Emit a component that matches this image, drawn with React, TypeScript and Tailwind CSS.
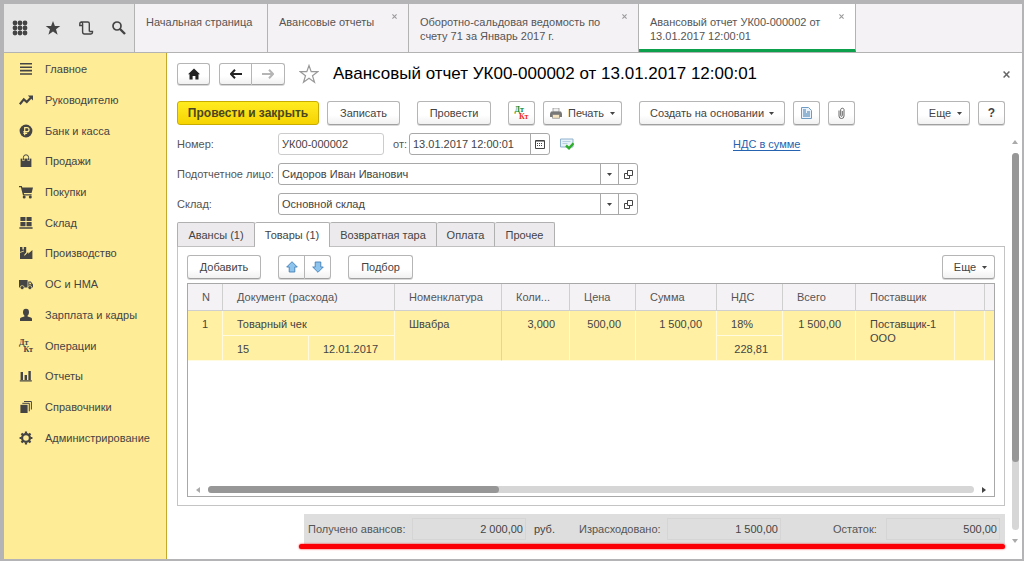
import React from 'react';
import clsx from 'clsx';

const Svg: React.FC<{ children: React.ReactNode; className?: string; box?: string }> = ({
    children,
    className = 'size-[14px]',
    box = '0 0 14 14',
}) => (
    <svg viewBox={box} className={clsx('shrink-0', className)} fill="currentColor" aria-hidden="true">
        {children}
    </svg>
);

const DtKt: React.FC<{ colored?: boolean }> = ({ colored }) => (
    <span className="flex flex-col w-[14px] font-['Liberation_Serif',serif] font-bold text-[8px] leading-[7px]" aria-hidden="true">
        <span className={clsx('self-start', colored && 'text-[#1d8a1d]')}>Дт</span>
        <span className={clsx('self-end', colored && 'text-[#ee2e24]')}>Кт</span>
    </span>
);

const Caret = () => (
    <Svg className="w-[5px] h-[3px]" box="0 0 5 3">
        <path d="M0 0h5L2.5 3z" />
    </Svg>
);

const sections = [
    { label: 'Главное', icon: <Svg><path d="M1 1h12v1.6H1zM1 4.4h12V6H1zM1 7.8h12v1.6H1zM1 11.2h12v1.6H1z" /></Svg> },
    { label: 'Руководителю', icon: <Svg><path d="M.8 11.2 4.8 6.4l3 2.6L12 4.6" fill="none" stroke="currentColor" strokeWidth="2.2" /><path d="M8.8 2.6H14v5z" /></Svg> },
    {
        label: 'Банк и касса',
        icon: (
            <Svg>
                <circle cx="7" cy="7" r="6.4" />
                <path d="M5.7 11.2V3.6H8a2 2 0 0 1 0 4.1H4.4M4.4 9.4h3.8" fill="none" stroke="#ffec97" strokeWidth="1.2" />
            </Svg>
        ),
    },
    { label: 'Продажи', icon: <Svg><path d="M1.6 4.6h10.8V13H1.6z" /><path d="M4.4 7V3.6a2.6 2.6 0 0 1 5.2 0V7" fill="none" stroke="#ffec97" strokeWidth="2" /><path d="M4.4 6.4V3.4a2.6 2.6 0 0 1 5.2 0v3" fill="none" stroke="currentColor" strokeWidth="1" /></Svg> },
    { label: 'Покупки', icon: <Svg><path d="M0 1h2.8l.5 1.4H14L12.6 8H4.8l.4 1.2h7.4v1.3H4L1.9 2.2H0z" /><circle cx="5.2" cy="12" r="1.5" /><circle cx="11.3" cy="12" r="1.5" /></Svg> },
    { label: 'Склад', icon: <Svg><path d="M1.4 1h5.1v4H1.4zM7.5 1h5.1v4H7.5zM1.4 6h5.1v4.2H1.4zM7.5 6h5.1v4.2H7.5zM.4 11.2h13.2v1.6H.4z" /></Svg> },
    { label: 'Производство', icon: <Svg><path d="M1 13V1h2.400v2.600h1.400V1h2.400v5.400L5.400 8.400V10l3.800-4v1.800L13.400 4v9z" /><path d="M.6 6.600 5 5" fill="none" stroke="#ffec97" strokeWidth=".8" /></Svg> },
    { label: 'ОС и НМА', icon: <Svg><path d="M0 3h8.6v7.4H0zM9.3 4.6h2.5L14 7.4v3H9.3z" /><circle cx="3.2" cy="10.6" r="2" stroke="#ffec97" strokeWidth=".7" /><circle cx="10.9" cy="10.6" r="2" stroke="#ffec97" strokeWidth=".7" /><path d="M10.3 5.6h1.1l1.1 1.6h-2.2z" fill="#ffec97" /></Svg> },
    { label: 'Зарплата и кадры', icon: <Svg><path d="M4 4.2a3 3.4 0 0 1 6 0c0 1.6-.6 2.8-1.4 3.4v1l3.2.9c.8.3 1.2.8 1.2 1.6V13H1v-1.9c0-.8.4-1.3 1.2-1.6l3.2-.9v-1C4.6 7 4 5.8 4 4.2z" /></Svg> },
    { label: 'Операции', icon: <DtKt /> },
    { label: 'Отчеты', icon: <Svg><path d="M1.6 3h2.4v8H1.6zM5.6 6H8v5H5.6zM9.4 2h2.4v9H9.4zM.8 11.2h12v1.2H.8z" /></Svg> },
    { label: 'Справочники', icon: <Svg><path d="M1.4 4.8h7.200V13H1.4z" /><path d="M3.3 3.3h7v8M5 1.5h7.4v8" fill="none" stroke="currentColor" strokeWidth="1" /></Svg> },
    {
        label: 'Администрирование',
        icon: (
            <Svg>
                <circle cx="7" cy="7" r="3.9" fill="none" stroke="currentColor" strokeWidth="2.2" />
                <path d="M7 .6v2M7 11.4v2M.6 7h2M11.4 7h2M2.5 2.5l1.4 1.4M10.1 10.1l1.4 1.4M2.5 11.5l1.4-1.4M10.1 3.9l1.4-1.4" stroke="currentColor" strokeWidth="2.2" />
            </Svg>
        ),
    },
];

const windows = [
    { title: 'Начальная страница', width: 'w-[133px]', closable: false },
    { title: 'Авансовые отчеты', width: 'w-[141px]', closable: true },
    { title: 'Оборотно-сальдовая ведомость по счету 71 за Январь 2017 г.', width: 'w-[230px]', closable: true },
    { title: 'Авансовый отчет УК00-000002 от 13.01.2017 12:00:01', width: 'w-[217px]', closable: true, active: true },
];

const Cross: React.FC<{ className?: string }> = ({ className }) => (
    <Svg className={className} box="0 0 6 6">
        <path d="M.5.5l5 5M5.5.5l-5 5" fill="none" stroke="currentColor" strokeWidth="1.3" />
    </Svg>
);

type ButtonProps = React.ButtonHTMLAttributes<HTMLButtonElement> & { primary?: boolean };

const Button: React.FC<ButtonProps> = ({ primary, className, children, ...rest }) => (
    <button
        type="button"
        className={clsx(
            'flex items-center justify-center shrink-0 rounded-[3px] border whitespace-nowrap',
            primary
                ? 'bg-gradient-to-b from-[#ffec1f] to-[#f6d300] border-[#c9ac00] font-bold text-[12px] text-[#4a4620]'
                : 'bg-gradient-to-b from-white from-60% to-[#f1f1f1] border-[#b5b5b5] border-b-[#a0a0a0] shadow-[0_1px_0_#d8d8d8]',
            className,
        )}
        {...rest}
    >
        {children}
    </button>
);

const SelectField: React.FC<{ id: string; label: string; value: string }> = ({ id, label, value }) => (
    <div className="flex items-center h-[22px]">
        <label htmlFor={id} className="w-[101px] shrink-0 whitespace-nowrap text-[#555]">{label}</label>
        <div className="flex w-[360px] h-[22px] rounded-[3px] border border-[#a8a8a8]">
            <input id={id} defaultValue={value} className="flex-1 min-w-0 px-[3px] outline-none" />
            <button type="button" aria-label={`Выбрать: ${label}`} className="w-[18px] border-l border-[#a8a8a8] flex items-center justify-center">
                <Caret />
            </button>
            <button type="button" aria-label={`Открыть: ${label}`} className="w-[19px] border-l border-[#a8a8a8] flex items-center justify-center">
                <Svg className="size-[9px]" box="0 0 9 9">
                    <path d="M3.5.5h5v5h-5zM3 3.5H.5v5h5V6" fill="none" stroke="currentColor" />
                </Svg>
            </button>
        </div>
    </div>
);

const totals = [
    { id: 'received', label: 'Получено авансов:', value: '2 000,00', width: 'w-[104px]', unit: 'руб.' },
    { id: 'spent', label: 'Израсходовано:', value: '1 500,00', width: 'w-[88px]' },
    { id: 'rest', label: 'Остаток:', value: '500,00', width: 'w-[53px] ml-[52px]' },
];

const tabs = [
    { label: 'Авансы (1)', width: 'w-[78px]' },
    { label: 'Товары (1)', width: 'w-[75px]', active: true },
    { label: 'Возвратная тара', width: 'w-[107px]' },
    { label: 'Оплата', width: 'w-[58px]' },
    { label: 'Прочее', width: 'w-[60px]' },
];

const th = 'h-[27px] border-r border-b border-[#cfcfcf] px-3.5 font-normal text-left whitespace-nowrap overflow-hidden';
const td = 'border-r border-b border-[#fffbe0] px-3.5 pt-1.5 align-top leading-[14px]';

const GoodsTable = () => (
    <table className="w-full table-fixed border-separate border-spacing-0">
        <colgroup>
            <col className="w-[35px]" />
            <col className="w-[86px]" />
            <col className="w-[86px]" />
            <col className="w-[107px]" />
            <col className="w-[68px]" />
            <col className="w-[66px]" />
            <col className="w-[81px]" />
            <col className="w-[66px]" />
            <col className="w-[73px]" />
            <col className="w-[99px]" />
            <col className="w-[30px]" />
            <col />
        </colgroup>
        <thead className="bg-[#f5f2f5] text-[#555]">
            <tr>
                <th className={th}>N</th>
                <th className={th} colSpan={2}>Документ (расхода)</th>
                <th className={th}>Номенклатура</th>
                <th className={th}>Коли...</th>
                <th className={th}>Цена</th>
                <th className={th}>Сумма</th>
                <th className={th}>НДС</th>
                <th className={th}>Всего</th>
                <th className={th} colSpan={2}>Поставщик</th>
                <th className="border-b border-[#cfcfcf]" />
            </tr>
        </thead>
        <tbody className="bg-[#fff0a3]">
            <tr className="h-[25px]">
                <td className={td} rowSpan={2}>1</td>
                <td className={td} colSpan={2}>Товарный чек</td>
                <td className={clsx(td, 'border-r-[#ddd5b0]')} rowSpan={2}>Швабра</td>
                <td className={clsx(td, 'text-right')} rowSpan={2}>3,000</td>
                <td className={clsx(td, 'text-right')} rowSpan={2}>500,00</td>
                <td className={clsx(td, 'text-right whitespace-nowrap')} rowSpan={2}>1 500,00</td>
                <td className={td}>18%</td>
                <td className={clsx(td, 'text-right whitespace-nowrap')} rowSpan={2}>1 500,00</td>
                <td className={td} rowSpan={2}>Поставщик-1 ООО</td>
                <td className={td} rowSpan={2} />
                <td className="border-b border-[#fffbe0]" rowSpan={2} />
            </tr>
            <tr className="h-[25px]">
                <td className={td}>15</td>
                <td className={td}>12.01.2017</td>
                <td className={clsx(td, 'text-right')}>228,81</td>
            </tr>
        </tbody>
    </table>
);

export default function App() {
    return (
        <div className="flex flex-col min-h-screen bg-[#b4b4b6] pt-1 pl-1 pr-0.5 pb-0.5 font-['Liberation_Sans',Arial,sans-serif] text-[11px] leading-[14px] text-[#444]">
            <header className="flex h-[49px] border-b border-[#b3b3b3] bg-[#f5f2f6]">
                <div className="flex items-center w-[131px] shrink-0 bg-[#e6e6e6] border-r border-[#b3b3b3] pl-2 gap-[17px]">
                    <button type="button" aria-label="Меню">
                        <Svg className="size-4" box="0 0 16 16">
                            {[3, 8, 13].map((y) => [3, 8, 13].map((x) => <circle key={`${x}-${y}`} cx={x} cy={y} r="2.4" />))}
                        </Svg>
                    </button>
                    <button type="button" aria-label="Избранное">
                        <Svg className="size-4" box="0 0 16 16">
                            <path d="M8 1l1.9 5h5.4l-4.3 3.3 1.6 5.4L8 11.5l-4.6 3.2L5 9.3.7 6h5.4z" />
                        </Svg>
                    </button>
                    <button type="button" aria-label="История">
                        <Svg className="size-4" box="0 0 16 16">
                            <path d="M4.500 5.500H1.800V4c0-1.200.7-2 1.800-2h6.200c1 0 1.500.7 1.500 1.600v7.900M3.400 2c.8.2 1.200.8 1.200 1.800v8c0 1.300.7 2.200 1.900 2.200h6.400c1 0 1.600-.8 1.600-1.700v-.8h-3.200" fill="none" stroke="currentColor" strokeWidth="1.4" />
                        </Svg>
                    </button>
                    <button type="button" aria-label="Поиск">
                        <Svg className="size-4" box="0 0 16 16">
                            <circle cx="6" cy="6" r="4" fill="none" stroke="currentColor" strokeWidth="1.7" />
                            <path d="M9 9l5 5" stroke="currentColor" strokeWidth="2.4" />
                        </Svg>
                    </button>
                </div>
                {windows.map((w) => (
                    <div
                        key={w.title}
                        className={clsx(
                            'relative shrink-0 border-r border-[#b3b3b3] pl-[11px] pr-[26px] pt-[11px] text-[#555]',
                            w.width,
                            w.active && 'bg-white border-b-[3px] border-b-[#0c9f4c]',
                            !w.closable && 'whitespace-nowrap',
                        )}
                    >
                        {w.title}
                        {w.closable && (
                            <button type="button" aria-label="Закрыть" className="absolute top-[10px] right-[11px] text-[#999]">
                                <Cross className="size-[5px]" />
                            </button>
                        )}
                    </div>
                ))}
            </header>

            <div className="flex flex-1">
                <nav className="w-[163px] shrink-0 bg-[#ffec97] border-r border-[#c4a92c] pt-px">
                    <ul className="grid auto-rows-fr h-[399px]">
                        {sections.map((s) => (
                            <li key={s.label} className="flex">
                                <a href="#" className="flex flex-1 items-center gap-3 pl-[15px]">
                                    {s.icon}
                                    {s.label}
                                </a>
                            </li>
                        ))}
                    </ul>
                </nav>

                <main className="flex flex-col flex-1 min-w-0 bg-white pl-[10px]">
                    <div className="flex items-center h-[22px] mt-[10px] pr-3">
                        <Button className="w-[33px] h-[22px]" aria-label="Домой">
                            <Svg className="size-3" box="0 0 12 12">
                                <path d="M6 .5 12 6.3h-1.5V11.5H7.4V8H4.6v3.5H1.5V6.3H0z" fill="#222" />
                            </Svg>
                        </Button>
                        <div className="flex ml-[9px]">
                            <Button className="w-[33px] h-[22px] rounded-r-none" aria-label="Назад">
                                <Svg className="w-3 h-[10px]" box="0 0 12 10">
                                    <path d="M5 .7.9 5 5 9.3M1.5 5H12" fill="none" stroke="#222" strokeWidth="2" />
                                </Svg>
                            </Button>
                            <Button className="w-[33px] h-[22px] rounded-l-none border-l-0" aria-label="Вперед">
                                <Svg className="w-3 h-[10px]" box="0 0 12 10">
                                    <path d="M7 .7 11.1 5 7 9.3M10.5 5H0" fill="none" stroke="#b5b5b5" strokeWidth="2" />
                                </Svg>
                            </Button>
                        </div>
                        <button type="button" aria-label="В избранное" className="ml-[14px] text-[#999]">
                            <Svg className="size-5" box="0 0 20 20">
                                <path d="M10 1.5l2.2 6.2h6.500l-5.200 4 2 6.500L10 14.300l-5.500 3.900 2-6.500-5.200-4h6.500z" fill="none" stroke="currentColor" strokeWidth="1.2" />
                            </Svg>
                        </button>
                        <h1 className="ml-[14px] text-[17px] leading-5 text-black whitespace-nowrap">Авансовый отчет УК00-000002 от 13.01.2017 12:00:01</h1>
                        <button type="button" aria-label="Закрыть" className="ml-auto text-[#666]">
                            <Cross className="size-[7px]" />
                        </button>
                    </div>

                    <div className="flex flex-1">
                        <div className="flex flex-col flex-1 min-w-0">
                            <div className="flex gap-2 mt-4 h-6">
                                <Button primary className="w-[142px]">Провести и закрыть</Button>
                                <Button className="w-[73px]">Записать</Button>
                                <Button className="w-[74px] ml-[9px]">Провести</Button>
                                <Button className="w-[27px] ml-[9px]" aria-label="Проводки"><DtKt colored /></Button>
                                <Button className="w-[79px] gap-[6px]">
                                    <Svg className="w-3 h-[11px]" box="0 0 12 11">
                                        <path d="M3 0h6v4H3z" fill="#eee" stroke="#888" strokeWidth=".7" />
                                        <path d="M1 3.500h10l1 2V9H0V5.500z" fill="#777" />
                                        <path d="M2.500 6.500h7v3.800h-7z" fill="#f3e3c0" stroke="#777" strokeWidth=".6" />
                                    </Svg>
                                    Печать
                                    <Caret />
                                </Button>
                                <Button className="w-[146px] ml-[9px] gap-[5px]">Создать на основании <Caret /></Button>
                                <Button className="w-[27px]" aria-label="Документ">
                                    <Svg className="w-[11px] h-3" box="0 0 11 12">
                                        <path d="M.5.5h7l3 3v8H.5z" fill="#eaf3fb" stroke="#6f9cc4" />
                                        <path d="M2 3h3M2 5h3M2 7h7M2 9h7M6 5h3" stroke="#3f78ae" />
                                    </Svg>
                                </Button>
                                <Button className="w-[27px]" aria-label="Файлы">
                                    <Svg className="w-[7px] h-3" box="0 0 7 12">
                                        <path d="M1 3.500V9a2.400 2.400 0 0 0 5 0V2.500a1.700 1.700 0 0 0-3.300 0v6a.8.8 0 0 0 1.600 0V4" fill="none" stroke="#666" />
                                    </Svg>
                                </Button>
                                <Button className="w-[53px] ml-auto gap-[6px] pl-1">Еще <Caret /></Button>
                                <Button className="w-[27px] font-bold text-[12px]">?</Button>
                            </div>

                            <div className="flex flex-col gap-2 mt-2">
                                <div className="flex items-center h-[22px]">
                                    <label htmlFor="number" className="w-[101px] shrink-0 text-[#555]">Номер:</label>
                                    <input id="number" defaultValue="УК00-000002" className="w-[106px] h-[22px] px-[3px] rounded-[3px] border border-[#ccc]" />
                                    <label htmlFor="date" className="w-[25px] pl-[9px] text-[#555]">от:</label>
                                    <div className="flex w-[141px] h-[22px] rounded-[3px] border border-[#a8a8a8]">
                                        <input id="date" defaultValue="13.01.2017 12:00:01" className="flex-1 min-w-0 px-[3px] outline-none" />
                                        <button type="button" aria-label="Календарь" className="w-[19px] border-l border-[#a8a8a8] flex items-center justify-center">
                                            <Svg className="w-[10px] h-[9px]" box="0 0 10 9">
                                                <path d="M.5.5h9v8h-9z" fill="none" stroke="currentColor" />
                                                <path d="M2 3.500h6M2 5.500h6" stroke="currentColor" strokeDasharray="1 1" />
                                                <path d="M1 1.500h8" stroke="#999" />
                                            </Svg>
                                        </button>
                                    </div>
                                    <Svg className="w-[14px] h-3 ml-[10px]" box="0 0 14 12">
                                        <path d="M.5 1h12.500v8H.5z" fill="#e8f1f8" stroke="#8fb2cf" />
                                        <path d="M2.500 3.500h8M2.500 5.500h5" stroke="#b7cfe2" />
                                        <path d="M6 7.500l3 2.800 4.500-5" fill="none" stroke="#2fae2b" strokeWidth="2.400" />
                                    </Svg>
                                    <a href="#" className="ml-[159px] text-[#2563b0] underline underline-offset-2">НДС в сумме</a>
                                </div>
                                <SelectField id="person" label="Подотчетное лицо:" value="Сидоров Иван Иванович" />
                                <SelectField id="store" label="Склад:" value="Основной склад" />
                            </div>

                            <div className="flex mt-[7px]" role="tablist">
                                {tabs.map((t) => (
                                    <button
                                        key={t.label}
                                        type="button"
                                        role="tab"
                                        aria-selected={!!t.active}
                                        className={clsx(
                                            'h-[25px] border-t border-r border-[#b0b0b0] first:border-l rounded-t-[2px] whitespace-nowrap',
                                            t.width,
                                            t.active ? 'bg-white' : 'bg-[#edeaed] border-b border-b-[#c0c0c0]',
                                        )}
                                    >
                                        {t.label}
                                    </button>
                                ))}
                                <div className="flex-1 border-b border-[#c0c0c0]" />
                            </div>

                            <section className="flex flex-col flex-1 border border-t-0 border-[#c4c4c4] px-[9px] py-2">
                                <div className="flex h-6">
                                    <Button className="w-[74px]">Добавить</Button>
                                    <Button className="w-[27px] ml-[17px] rounded-r-none" aria-label="Вверх">
                                        <Svg className="size-3" box="0 0 12 12">
                                            <path d="M6 .7 11.3 6H8.8v5H3.2V6H.7z" fill="#8cc4ee" stroke="#447fb5" strokeWidth=".9" />
                                        </Svg>
                                    </Button>
                                    <Button className="w-[26px] rounded-l-none border-l-0" aria-label="Вниз">
                                        <Svg className="size-3" box="0 0 12 12">
                                            <path d="M6 11.3 11.3 6H8.8V1H3.2v5H.7z" fill="#8cc4ee" stroke="#447fb5" strokeWidth=".9" />
                                        </Svg>
                                    </Button>
                                    <Button className="w-[65px] ml-[17px]">Подбор</Button>
                                    <Button className="w-[53px] ml-auto gap-[6px] pl-1">Еще <Caret /></Button>
                                </div>

                                <div className="flex flex-col flex-1 mt-1 border border-[#a8a8a8]">
                                    <GoodsTable />
                                    <div className="flex items-center mt-auto h-[13px] px-2">
                                        <Svg className="w-1 h-[6px] text-[#aaa]" box="0 0 4 6"><path d="M4 0v6L0 3z" /></Svg>
                                        <div className="flex-1 h-[7px] mx-2 rounded-full bg-[#d6d6d6]">
                                            <div className="w-[38%] h-[7px] rounded-full bg-[#979797]" />
                                        </div>
                                        <Svg className="w-1 h-[6px]" box="0 0 4 6"><path d="M0 0v6l4-3z" /></Svg>
                                    </div>
                                </div>
                            </section>

                            <footer className="self-end mt-2 mb-[10px]">
                                <div className="flex items-center h-[30px] bg-[#dedede] pl-1 pr-[5px]">
                                    {totals.map((t) => (
                                        <div key={t.id} className="flex items-center">
                                            <label htmlFor={t.id} className={clsx('whitespace-nowrap text-[#555]', t.width)}>{t.label}</label>
                                            <input id={t.id} readOnly defaultValue={t.value} className="w-[114px] h-[22px] px-0.5 text-right border border-[#d5d5d5]" />
                                            {t.unit && <span className="w-[53px] pl-2">{t.unit}</span>}
                                        </div>
                                    ))}
                                </div>
                                <div className="h-[5px] -ml-[5px] rounded-full bg-[#fb0007] shadow-[0_0_2px_#fb0007]" />
                            </footer>
                        </div>

                        <div className="flex flex-col items-center w-[17px] pl-[3px] shrink-0 pt-[55px] pb-4">
                            <Svg className="w-[6px] h-1 text-[#aaa]" box="0 0 6 4"><path d="M0 4h6L3 0z" /></Svg>
                            <div className="flex-1 w-[7px] my-[9px] rounded-full bg-[#d6d6d6]">
                                <div className="h-[82%] w-[7px] rounded-full bg-[#979797]" />
                            </div>
                            <Svg className="w-[6px] h-1 text-[#aaa]" box="0 0 6 4"><path d="M0 0h6L3 4z" /></Svg>
                        </div>
                    </div>
                </main>
            </div>
        </div>
    );
}
